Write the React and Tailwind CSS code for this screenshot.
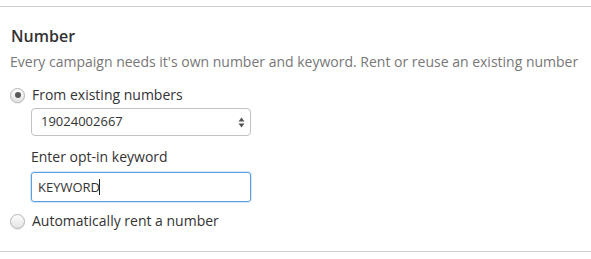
import React, { useState } from 'react';

function Radio({ checked }) {
  return (
    <span className="relative flex h-[15px] w-[15px] shrink-0 items-center justify-center rounded-full border border-[#b4b4b4] bg-gradient-to-b from-[#fdfdfd] to-[#e4e4e4] shadow-[0_1px_1px_rgba(0,0,0,0.08)]">
      {checked && <span className="h-[6px] w-[6px] rounded-full bg-[#5a5a5a]" />}
    </span>
  );
}

export default function App() {
  const [mode, setMode] = useState('existing');
  const [keyword, setKeyword] = useState('KEYWORD');

  return (
    <div className="h-[259px] w-[591px] bg-white pt-[6px] text-[14px] text-[#333] font-['Open_Sans',sans-serif]">
      <div className="border-t border-[#cfcfcf] px-[10px]">
        <h2 className="mt-[19px] pl-[1px] text-[16px] font-semibold leading-[20px] text-[#333]">Number</h2>
        <p className="mt-[6px] leading-[20px] text-[#777]">
          Every campaign needs it's own number and keyword. Rent or reuse an existing number
        </p>

        <label className="mt-[13px] flex items-center gap-[7px] leading-[20px]" onClick={() => setMode('existing')}>
          <Radio checked={mode === 'existing'} />
          <span>From existing numbers</span>
        </label>

        <div className="ml-[21px] w-[220px]">
          <div className="relative mt-[3px]">
            <select className="h-[28px] w-full appearance-none rounded-[4px] border border-[#c2c2c2] bg-white pl-[9px] text-[13px] text-[#333] outline-none">
              <option>19024002667</option>
            </select>
            <svg className="pointer-events-none absolute right-[6px] top-[9px]" width="7" height="11" viewBox="0 0 7 11">
              <path d="M3.5 0.5 L6.5 4.5 L0.5 4.5 Z" fill="#555" />
              <path d="M3.5 10.5 L6.5 6.5 L0.5 6.5 Z" fill="#555" />
            </svg>
          </div>

          <div className="mt-[11px] leading-[20px]">Enter opt-in keyword</div>
          <div className="relative mt-[5px]">
            <input
              value={keyword}
              onChange={e => setKeyword(e.target.value)}
              className="h-[30px] w-full rounded-[3px] border border-[#5c9ee0] px-[6px] text-[13px] text-[#333] outline-none shadow-[0_0_0_1px_rgba(92,158,224,0.25)]"
            />
            <span className="pointer-events-none absolute left-[68px] top-[7px] h-[16px] w-px bg-[#222]" />
          </div>
        </div>

        <label className="mt-[9px] flex items-center gap-[7px] leading-[20px]" onClick={() => setMode('rent')}>
          <Radio checked={mode === 'rent'} />
          <span>Automatically rent a number</span>
        </label>
      </div>
      <div className="mt-[20px] border-t border-[#cfcfcf]" />
    </div>
  );
}
